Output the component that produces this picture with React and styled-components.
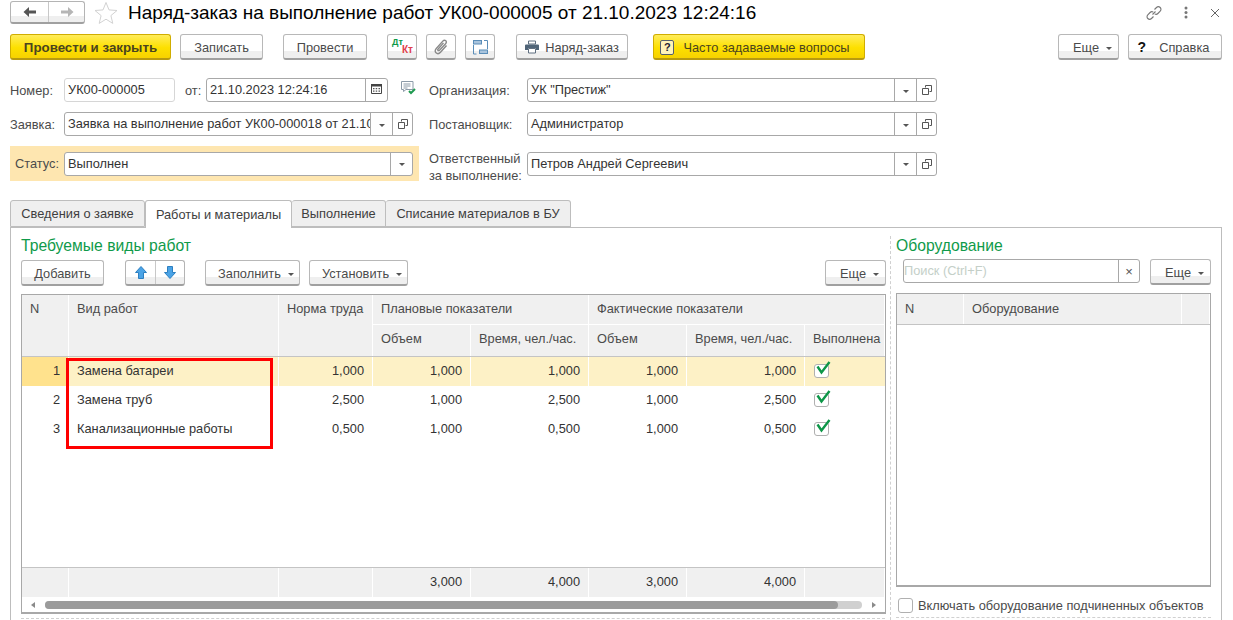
import React from "react";
import styled, { createGlobalStyle } from "styled-components";

const GlobalStyle = createGlobalStyle`
    html, body {
        margin: 0;
        padding: 0;
        background: #fff;
    }
    body {
        width: 1233px;
        height: 620px;
        overflow: hidden;
        font-family: "Liberation Sans", Arial, sans-serif;
        font-size: 12.8px;
        color: #4b4b4b;
    }
`;

const Page = styled.div`
    height: 620px;
    overflow: hidden;
    padding: 0 11px 0 10px;
    display: flex;
    flex-direction: column;
`;

const TitleBar = styled.div`
    height: 25px;
    display: flex;
    align-items: center;
`;

const Segment = styled.div`
    display: flex;
    border: 1px solid #b4b4b4;
    border-bottom: 2px solid #a0a0a0;
    border-radius: 3px;
    background: linear-gradient(#fff 0 70%, #efefef 70%);
`;

const SegmentPart = styled.div`
    width: ${p => p.$w}px;
    height: ${p => p.$h}px;
    display: flex;
    align-items: center;
    justify-content: center;
    & + & {
        border-left: 1px solid #c8c8c8;
    }
`;

const StarSlot = styled.div`
    width: 41px;
    height: 24px;
    display: flex;
    align-items: center;
    justify-content: center;
`;

const Title = styled.h1`
    margin: 0 0 0 2px;
    font-size: 19px;
    line-height: 24px;
    font-weight: normal;
    color: #000;
    white-space: nowrap;
`;

const TitleIcons = styled.div`
    margin-left: auto;
    margin-right: 2px;
    display: flex;
    align-items: center;
    gap: 22px;
`;

const Toolbar = styled.div`
    height: 26px;
    margin-top: 9px;
    display: flex;
`;

const Button = styled.div`
    box-sizing: border-box;
    width: ${p => p.$w}px;
    height: 26px;
    margin-left: ${p => p.$ml || 0}px;
    flex: none;
    display: flex;
    align-items: center;
    justify-content: center;
    gap: ${p => p.$gap || 0}px;
    padding: 1px ${p => p.$pr || 0}px 0 ${p => p.$pl || 0}px;
    white-space: nowrap;
    border-radius: 3px;
    border: 1px solid ${p => (p.$yellow ? "#d0ad00" : "#b8b8b8")};
    border-bottom: 2px solid ${p => (p.$yellow ? "#b89a10" : "#a0a0a0")};
    color: ${p => (p.$yellow ? "#4a4420" : "#4b4b4b")};
    font-size: ${p => (p.$bold ? "13.3px" : "inherit")};
    font-weight: ${p => (p.$bold ? "bold" : "normal")};
    background: ${p =>
        p.$yellow
            ? "linear-gradient(#ffec5a, #fde000 55%, #f7d200)"
            : "linear-gradient(#fff 0 70%, #efefef 70%)"};
`;

const Caret = styled.span`
    width: 0;
    height: 0;
    margin-left: ${p => p.$ml ?? 7}px;
    margin-top: 2px;
    border-left: 3px solid transparent;
    border-right: 3px solid transparent;
    border-top: 3px solid #555;
`;

const FormGrid = styled.div`
    margin-top: 18px;
    display: grid;
    grid-template-columns: 409px 508px;
    grid-template-rows: 24px 24px 35px;
    row-gap: 10px;
    column-gap: 10px;
    width: 927px;
`;

const FormRow = styled.div`
    display: flex;
    align-items: center;
`;

const StatusRow = styled(FormRow)`
    background: #fee6b0;
`;

const Label = styled.label`
    width: ${p => p.$w}px;
    margin-left: ${p => p.$ml || 0}px;
    flex: none;
    line-height: 17px;
    white-space: nowrap;
`;

const TwoLineLabel = styled(Label)`
    align-self: flex-start;
    margin-top: 4px;
`;

const Field = styled.div`
    box-sizing: border-box;
    width: ${p => p.$w}px;
    height: 24px;
    margin-left: ${p => p.$ml || 0}px;
    flex: none;
    display: flex;
    align-items: stretch;
    background: #fff;
    border: 1px solid ${p => (p.$plain ? "#d6d6d6" : "#a8a8a8")};
    border-radius: 3px;
`;

const FieldText = styled.div`
    flex: 1;
    min-width: 0;
    padding-left: ${p => p.$pl ?? 3}px;
    line-height: 22px;
    overflow: hidden;
    white-space: nowrap;
    color: ${p => p.$color || "#333"};
`;

const FieldButton = styled.div`
    width: ${p => p.$w || 21}px;
    padding-bottom: ${p => p.$pb || 0}px;
    flex: none;
    display: flex;
    align-items: center;
    justify-content: center;
    border-left: 1px solid #a8a8a8;
`;

const Tabs = styled.div`
    margin-top: 19px;
    height: 27px;
    display: flex;
    position: relative;
    z-index: 1;
`;

const Tab = styled.div`
    box-sizing: border-box;
    width: ${p => p.$w}px;
    height: ${p => (p.$active ? 28 : 27)}px;
    display: flex;
    align-items: center;
    justify-content: center;
    padding-bottom: 1px;
    border: 1px solid #bdbdbd;
    border-left-width: ${p => (p.$first || p.$active ? 1 : 0)}px;
    border-bottom: ${p => (p.$active ? "none" : "1px solid #bdbdbd")};
    border-radius: 3px 3px 0 0;
    background: ${p => (p.$active ? "#fff" : "#efefef")};
    color: #3e3e3e;
`;

const Panel = styled.div`
    flex: 1;
    min-height: 0;
    display: flex;
    border: 1px solid #bdbdbd;
    border-bottom: none;
`;

const LeftPane = styled.div`
    width: 864px;
    flex: none;
    padding-left: 10px;
    display: flex;
    flex-direction: column;
`;

const RightPane = styled.div`
    width: 315px;
    flex: none;
    padding-left: 5px;
    display: flex;
    flex-direction: column;
    border-left: 1px dashed #d0d0d0;
    margin: 8px 0 0 5px;
`;

const SectionTitle = styled.div`
    margin-top: ${p => p.$mt || 0}px;
    height: 18px;
    font-size: 15.7px;
    line-height: ${p => p.$lh || 18}px;
    color: #0f9a4a;
`;

const PaneToolbar = styled.div`
    height: 26px;
    margin-top: 5px;
    display: flex;
    flex: none;
`;

const MoveButtons = styled(Segment)`
    margin-left: 21px;
    height: 23px;
`;

const GridBox = styled.div`
    box-sizing: border-box;
    width: ${p => p.$w}px;
    height: ${p => p.$h}px;
    margin-top: 8px;
    flex: none;
    display: flex;
    flex-direction: column;
    border: 1px solid #a8a8a8;
    border-bottom-width: 2px;
    background: #fff;
`;

const WorkHead = styled.div`
    display: grid;
    grid-template-columns: 47px 210px 94px 98px 118px 98px 118px 1fr;
    grid-template-rows: 30px 31px;
    border-bottom: 1px solid #c4c4c4;
    flex: none;
`;

const HeadCell = styled.div`
    grid-column: ${p => p.$col};
    grid-row: ${p => p.$row};
    padding: ${p => p.$pt || 6}px 0 0 8px;
    background: #f0f0f0;
    border-right: 1px solid #fff;
    border-bottom: ${p => (p.$split ? "1px solid #fff" : "none")};
    box-shadow: ${p => (p.$split ? "0 1px 0 #d4d4d4" : "none")};
    white-space: nowrap;
    overflow: hidden;
`;

const Row = styled.div`
    display: grid;
    grid-template-columns: 47px 210px 94px 98px 118px 98px 118px 1fr;
    height: 29px;
    flex: none;
    background: ${p => (p.$selected ? "#fdf1c6" : "#fff")};
`;

const Cell = styled.div`
    padding: 0 8px;
    line-height: 28px;
    color: #333;
    text-align: ${p => (p.$left ? "left" : "right")};
    background: ${p => (p.$mark ? "#ffe28d" : "transparent")};
    border-right: 1px solid ${p => (p.$selected ? "#fff" : "transparent")};
    white-space: nowrap;
`;

const CheckCell = styled(Cell)`
    display: flex;
    align-items: center;
    padding: 0 0 0 9px;
`;

const RowsArea = styled.div`
    flex: 1;
    min-height: 0;
    position: relative;
`;

const Highlight = styled.div`
    position: absolute;
    left: 44px;
    top: 1px;
    width: 207px;
    height: 91px;
    box-sizing: border-box;
    border: 3px solid #f00;
`;

const Footer = styled(Row)`
    background: #fff;
    border-top: 1px solid #c4c4c4;
    box-sizing: content-box;
`;

const FooterCell = styled(Cell)`
    background: #f0f0f0;
    border-right: 1px solid #fff;
`;

const ScrollBar = styled.div`
    height: 15px;
    flex: none;
    display: flex;
    align-items: center;
    padding: 0 9px;
    gap: 10px;
`;

const ScrollTrack = styled.div`
    flex: 1;
    height: 8px;
    border-radius: 4px;
    background: #d0d0d0;
`;

const ScrollThumb = styled.div`
    width: 793px;
    height: 8px;
    border-radius: 4px;
    background: #9b9b9b;
`;

const ScrollArrow = styled.span`
    width: 0;
    height: 0;
    border-top: 3px solid transparent;
    border-bottom: 3px solid transparent;
    border-${p => (p.$right ? "left" : "right")}: 4px solid #8a8a8a;
`;

const BottomRule = styled.div`
    margin-top: 4px;
    width: ${p => p.$w}px;
    border-top: 1px dashed #d0d0d0;
`;

const EquipHead = styled.div`
    display: grid;
    grid-template-columns: 67px 218px 1fr;
    height: 30px;
    flex: none;
    border-bottom: 1px solid #c4c4c4;
`;

const CheckLine = styled.div`
    display: flex;
    align-items: center;
    height: 16px;
    margin: 10px 0 0 2px;
    gap: 5px;
    white-space: nowrap;
`;

const Box = styled.span`
    display: block;
    box-sizing: border-box;
    width: 15px;
    height: ${p => p.$h || 15}px;
    flex: none;
    border: 1px solid #b0b0b0;
    border-radius: 3px;
    background: #fff;
`;

const CheckWrap = styled.span`
    position: relative;
    width: 15px;
    height: 14px;
    display: block;
    top: -1px;
`;

const CheckMark = styled.svg`
    position: absolute;
    left: 0;
    top: -3px;
`;

const AccountingIcon = styled.span`
    position: relative;
    width: 22px;
    height: 18px;
    display: block;
    font-weight: bold;
`;

const Debit = styled.span`
    position: absolute;
    left: 1px;
    top: 0;
    font-size: 9px;
    line-height: 9px;
    color: #0c9a48;
`;

const Credit = styled.span`
    position: absolute;
    right: 0;
    top: 7px;
    font-size: 10px;
    line-height: 10px;
    color: #e0404a;
`;

const QuestionBox = styled.span`
    box-sizing: border-box;
    width: 14px;
    height: 15px;
    border: 1px solid #55606e;
    border-radius: 2px;
    background: #fff3b8;
    color: #223;
    font-size: 11px;
    font-weight: bold;
    line-height: 13px;
    text-align: center;
`;

const HelpMark = styled.span`
    color: #111;
    font-size: 14px;
    font-weight: bold;
`;

const Clear = styled.span`
    color: #555;
    font-size: 13px;
    line-height: 13px;
`;

const ArrowIcon = ({ right, color }) => (
    <svg width="14" height="10" viewBox="0 0 14 10">
        <path
            d={right ? "M1 3.5h7V0l5.5 5L8 10V6.5H1z" : "M13 3.5H6V0L.5 5 6 10V6.5h7z"}
            fill={color}
        />
    </svg>
);

const StarIcon = () => (
    <svg width="24" height="23" viewBox="0 0 24 23">
        <path
            d="M12 1.5l3 7.4 8 .6-6.100 5.100 1.900 7.800L12 18.200l-6.800 4.200 1.900-7.800L1 9.500l8-.6z"
            fill="#fff"
            stroke="#d2d2d2"
        />
    </svg>
);

const LinkIcon = () => (
    <svg width="16" height="16" viewBox="0 0 16 16" fill="none" stroke="#777" strokeWidth="1.100">
        <path d="M6.500 9.500l3-3" />
        <path d="M8.500 4.500l2-2a2.600 2.600 0 0 1 3.700 3.700l-2.300 2.300a2.600 2.600 0 0 1-3.200.4" />
        <path d="M7.500 11.500l-2 2a2.600 2.600 0 0 1-3.700-3.700l2.300-2.300a2.600 2.600 0 0 1 3.200-.4" />
    </svg>
);

const DotsIcon = () => (
    <svg width="4" height="13" viewBox="0 0 4 13" fill="#777">
        <circle cx="2" cy="2" r="1.500" />
        <circle cx="2" cy="6.500" r="1.500" />
        <circle cx="2" cy="11" r="1.500" />
    </svg>
);

const CloseIcon = () => (
    <svg width="10" height="10" viewBox="0 0 10 10" stroke="#666" strokeWidth="1">
        <path d="M1 1l8 8M9 1l-8 8" />
    </svg>
);

const ClipIcon = () => (
    <svg width="14" height="16" viewBox="0 0 14 16" fill="none" stroke="#8a8a8a" strokeWidth="1.400">
        <path d="M12.500 6.500l-6 6.800c-1.300 1.400-3.300 1.600-4.500.5s-1-3 .3-4.400l6.500-7.300c.9-1 2.200-1.100 3-.4s.7 2-.2 3L5.500 11.200c-.5.500-1.100.6-1.500.2s-.3-1 .2-1.500l5.300-6" />
    </svg>
);

const StructureIcon = () => (
    <svg width="16" height="16" viewBox="0 0 16 16">
        <g fill="#a9c4dd" stroke="#5a8db8">
            <rect x="1.500" y="1.500" width="8" height="3.500" />
            <rect x="7.500" y="11" width="8" height="3.500" />
        </g>
        <path d="M1.500 6v9h3M12 1.500h3.500V10" fill="none" stroke="#5a8db8" />
    </svg>
);

const PrinterIcon = () => (
    <svg width="14" height="14" viewBox="0 0 14 14">
        <path d="M3.500 1h7v3h-7z" fill="#fff" stroke="#5f6f80" />
        <path d="M1 4.500h12a1 1 0 0 1 1 1V10h-3V8H3v2H0V5.500a1 1 0 0 1 1-1z" fill="#4f6478" />
        <path d="M3.500 8.500h7v4.500h-7z" fill="#fff" stroke="#5f6f80" />
    </svg>
);

const CalendarIcon = () => (
    <svg width="11" height="11" viewBox="0 0 11 11">
        <path d="M.5 1.500h10v9H.5z" fill="#fff" stroke="#444" />
        <path d="M0 1h11v2.500H0z" fill="#444" />
        <path d="M2 5h1.500v1.200H2zM4.700 5h1.500v1.200H4.700zM7.500 5H9v1.200H7.500zM2 7.500h1.500v1.200H2zM4.700 7.500h1.500v1.200H4.700zM7.500 7.500H9v1.200H7.500z" fill="#555" />
    </svg>
);

const CommentIcon = () => (
    <svg width="15" height="14" viewBox="0 0 15 14">
        <path d="M.5.500h11.500v8H5L2.500 10.500v-2h-2z" fill="#fff" stroke="#8b9aa8" />
        <path d="M2.500 3h7M2.500 5h7M2.500 7h4" stroke="#8b9aa8" />
        <path d="M8 10l2 2 4-4" fill="none" stroke="#1f9a50" strokeWidth="2" />
    </svg>
);

const OpenIcon = () => (
    <svg width="10" height="10" viewBox="0 0 10 10" fill="none" stroke="#555">
        <path d="M3.500 2.500v-2h6v6h-2" />
        <path d="M.5 3.500h6v6h-6z" />
    </svg>
);

const BlueArrow = ({ down }) => (
    <svg width="12" height="13" viewBox="0 0 12 13">
        <path
            d={down ? "M6 12.500L11.500 6.500H8.500V.5H3.500V6.500H.5z" : "M6 .5L11.500 6.500H8.500V12.500H3.500V6.500H.5z"}
            fill="#4aa3e6"
            stroke="#2d7fc0"
        />
    </svg>
);

const CheckedBox = () => (
    <CheckWrap>
        <Box $h={14} />
        <CheckMark width="17" height="14" viewBox="0 0 17 14">
            <path d="M3.500 5.500l4 6L15.500 1" fill="none" stroke="#0d9648" strokeWidth="2.400" />
        </CheckMark>
    </CheckWrap>
);

const works = [
    { n: 1, name: "Замена батареи", norm: "1,000", planVol: "1,000", planTime: "1,000", factVol: "1,000", factTime: "1,000" },
    { n: 2, name: "Замена труб", norm: "2,500", planVol: "1,000", planTime: "2,500", factVol: "1,000", factTime: "2,500" },
    { n: 3, name: "Канализационные работы", norm: "0,500", planVol: "1,000", planTime: "0,500", factVol: "1,000", factTime: "0,500" },
];

function SelectField({ w, text, noOpen }) {
    return (
        <Field $w={w}>
            <FieldText>{text}</FieldText>
            <FieldButton><Caret $ml={0} /></FieldButton>
            {!noOpen && <FieldButton $w={19}><OpenIcon /></FieldButton>}
        </Field>
    );
}

function App() {
    return (
        <Page>
            <GlobalStyle />
            <TitleBar>
                <Segment>
                    <SegmentPart $w={37} $h={20}><ArrowIcon color="#555" /></SegmentPart>
                    <SegmentPart $w={35} $h={20}><ArrowIcon right color="#b5b5b5" /></SegmentPart>
                </Segment>
                <StarSlot><StarIcon /></StarSlot>
                <Title>Наряд-заказ на выполнение работ УК00-000005 от 21.10.2023 12:24:16</Title>
                <TitleIcons>
                    <LinkIcon />
                    <DotsIcon />
                    <CloseIcon />
                </TitleIcons>
            </TitleBar>

            <Toolbar>
                <Button $yellow $bold $w={161}>Провести и закрыть</Button>
                <Button $w={83} $ml={9}>Записать</Button>
                <Button $w={84} $ml={20}>Провести</Button>
                <Button $w={30} $ml={20}><AccountingIcon><Debit>Дт</Debit><Credit>Кт</Credit></AccountingIcon></Button>
                <Button $w={30} $ml={9}><ClipIcon /></Button>
                <Button $w={30} $ml={9}><StructureIcon /></Button>
                <Button $w={112} $ml={21} $gap={6}><PrinterIcon />Наряд-заказ</Button>
                <Button $yellow $w={212} $ml={25} $gap={9} $pr={8}><QuestionBox>?</QuestionBox>Часто задаваемые вопросы</Button>
                <Button $w={61} $ml={193} $pl={8}>Еще<Caret /></Button>
                <Button $w={94} $ml={9} $gap={13} $pr={3}><HelpMark>?</HelpMark>Справка</Button>
            </Toolbar>

            <FormGrid>
                <FormRow>
                    <Label $w={54}>Номер:</Label>
                    <Field $w={111} $plain><FieldText>УК00-000005</FieldText></Field>
                    <Label $w={21} $ml={10}>от:</Label>
                    <Field $w={182}>
                        <FieldText>21.10.2023 12:24:16</FieldText>
                        <FieldButton $pb={3}><CalendarIcon /></FieldButton>
                    </Field>
                    <Label as="span" $w={15} $ml={13}><CommentIcon /></Label>
                </FormRow>
                <FormRow>
                    <Label $w={98}>Организация:</Label>
                    <SelectField w={410} text={'УК "Престиж"'} />
                </FormRow>
                <FormRow>
                    <Label $w={54}>Заявка:</Label>
                    <SelectField w={349} text="Заявка на выполнение работ УК00-000018 от 21.10.2023" />
                </FormRow>
                <FormRow>
                    <Label $w={98}>Постановщик:</Label>
                    <SelectField w={410} text="Администратор" />
                </FormRow>
                <StatusRow>
                    <Label $w={49} $ml={5}>Статус:</Label>
                    <SelectField w={349} text="Выполнен" noOpen />
                </StatusRow>
                <FormRow>
                    <TwoLineLabel $w={98}>Ответственный<br />за выполнение:</TwoLineLabel>
                    <SelectField w={410} text="Петров Андрей Сергеевич" />
                </FormRow>
            </FormGrid>

            <Tabs>
                <Tab $first $w={135}>Сведения о заявке</Tab>
                <Tab $active $w={147}>Работы и материалы</Tab>
                <Tab $w={94}>Выполнение</Tab>
                <Tab $w={185}>Списание материалов в БУ</Tab>
            </Tabs>

            <Panel>
                <LeftPane>
                    <SectionTitle $mt={9}>Требуемые виды работ</SectionTitle>
                    <PaneToolbar>
                        <Button $w={83}>Добавить</Button>
                        <MoveButtons>
                            <SegmentPart $w={29} $h={23}><BlueArrow /></SegmentPart>
                            <SegmentPart $w={28} $h={23}><BlueArrow down /></SegmentPart>
                        </MoveButtons>
                        <Button $w={95} $ml={20} $pl={7}>Заполнить<Caret /></Button>
                        <Button $w={99} $ml={9} $pl={7}>Установить<Caret /></Button>
                        <Button $w={61} $ml={417} $pl={8}>Еще<Caret /></Button>
                    </PaneToolbar>
                    <GridBox $w={865} $h={320}>
                        <WorkHead>
                            <HeadCell $col="1" $row="1 / 3">N</HeadCell>
                            <HeadCell $col="2" $row="1 / 3">Вид работ</HeadCell>
                            <HeadCell $col="3" $row="1 / 3">Норма труда</HeadCell>
                            <HeadCell $col="4 / 6" $row="1" $split>Плановые показатели</HeadCell>
                            <HeadCell $col="6 / 9" $row="1" $split>Фактические показатели</HeadCell>
                            <HeadCell $col="4" $row="2">Объем</HeadCell>
                            <HeadCell $col="5" $row="2">Время, чел./час.</HeadCell>
                            <HeadCell $col="6" $row="2">Объем</HeadCell>
                            <HeadCell $col="7" $row="2">Время, чел./час.</HeadCell>
                            <HeadCell $col="8" $row="2">Выполнена</HeadCell>
                        </WorkHead>
                        <RowsArea>
                            {works.map((w) => {
                                const sel = w.n === 1;
                                return (
                                    <Row key={w.n} $selected={sel}>
                                        <Cell $mark={sel} $selected={sel}>{w.n}</Cell>
                                        <Cell $left $selected={sel}>{w.name}</Cell>
                                        <Cell $selected={sel}>{w.norm}</Cell>
                                        <Cell $selected={sel}>{w.planVol}</Cell>
                                        <Cell $selected={sel}>{w.planTime}</Cell>
                                        <Cell $selected={sel}>{w.factVol}</Cell>
                                        <Cell $selected={sel}>{w.factTime}</Cell>
                                        <CheckCell><CheckedBox /></CheckCell>
                                    </Row>
                                );
                            })}
                            <Highlight />
                        </RowsArea>
                        <Footer>
                            <FooterCell />
                            <FooterCell />
                            <FooterCell />
                            <FooterCell>3,000</FooterCell>
                            <FooterCell>4,000</FooterCell>
                            <FooterCell>3,000</FooterCell>
                            <FooterCell>4,000</FooterCell>
                            <FooterCell />
                        </Footer>
                        <ScrollBar>
                            <ScrollArrow />
                            <ScrollTrack><ScrollThumb /></ScrollTrack>
                            <ScrollArrow $right />
                        </ScrollBar>
                    </GridBox>
                    <BottomRule $w={864} />
                </LeftPane>
                <RightPane>
                    <SectionTitle $lh={20}>Оборудование</SectionTitle>
                    <PaneToolbar>
                        <Field $w={237} $ml={7}>
                            <FieldText $pl={0} $color="#c4cfc8">Поиск (Ctrl+F)</FieldText>
                            <FieldButton $w={20}><Clear>×</Clear></FieldButton>
                        </Field>
                        <Button $w={61} $ml={10} $pl={8}>Еще<Caret /></Button>
                    </PaneToolbar>
                    <GridBox $w={315} $h={294}>
                        <EquipHead>
                            <HeadCell $col="1" $row="1" $pt={7}>N</HeadCell>
                            <HeadCell $col="2" $row="1" $pt={7}>Оборудование</HeadCell>
                            <HeadCell $col="3" $row="1" />
                        </EquipHead>
                    </GridBox>
                    <CheckLine><Box />Включать оборудование подчиненных объектов</CheckLine>
                    <BottomRule $w={315} />
                </RightPane>
            </Panel>
        </Page>
    );
}

export default App;
